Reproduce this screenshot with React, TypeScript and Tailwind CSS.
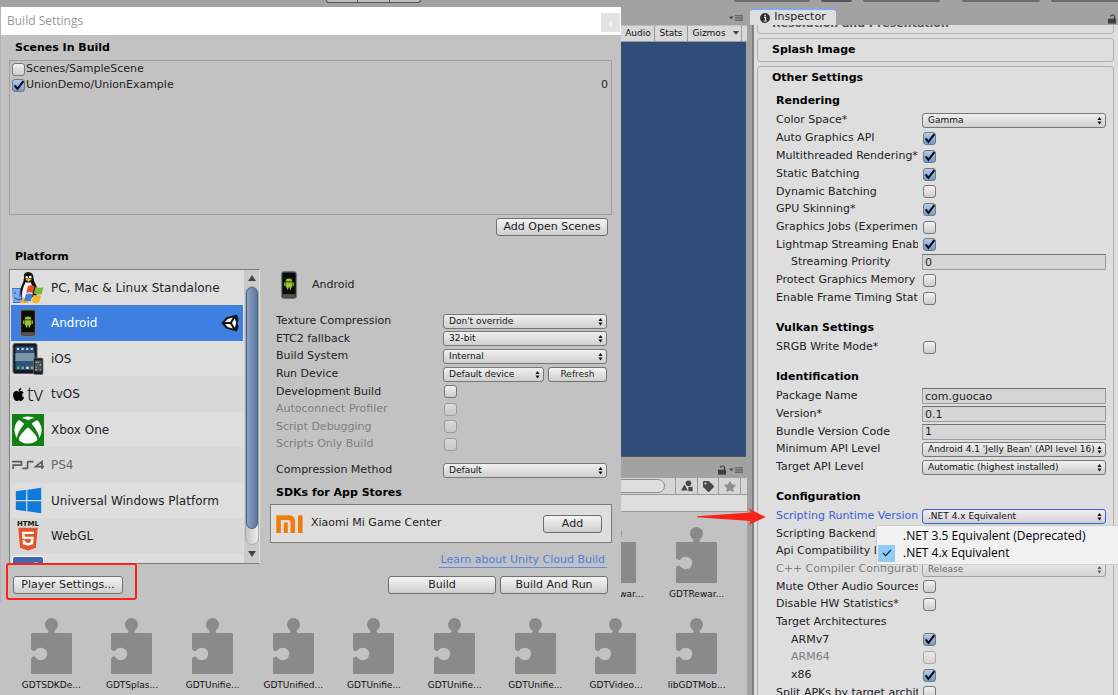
import { useId, useState } from "react";
import type { ReactNode } from "react";
import clsx from "clsx";
import { FaApple, FaHtml5, FaFacebookF, FaStar, FaTag, FaWindows, FaXbox } from "react-icons/fa";

const BUTTON =
  "rounded-[3px] border border-[#6f6f6f] bg-linear-to-b from-[#f4f4f4] to-[#cfcfcf] text-center text-[#222]";

type RowProps = {
  label: string;
  htmlFor?: string;
  tight?: boolean;
  indent?: boolean;
  disabled?: boolean;
  active?: boolean;
  wide?: boolean;
  children?: ReactNode;
};

function Row({ label, htmlFor, tight, indent, disabled, active, wide, children }: RowProps) {
  return (
    <div className={clsx("flex items-center", tight ? "h-[17px]" : "h-[18px]")}>
      <label
        htmlFor={htmlFor}
        className={clsx(
          "mr-1 shrink-0 overflow-hidden whitespace-nowrap leading-4",
          wide ? "w-[163px]" : "w-[142px]",
          indent && "pl-[15px]",
          disabled && "text-[#7f7f7f]",
          active && "text-[#3a5fd9]",
        )}
      >
        {label}
      </label>
      {children}
    </div>
  );
}

type CheckProps = { id?: string; checked?: boolean; disabled?: boolean; label?: string };

function Check({ id, checked = false, disabled, label }: CheckProps) {
  const [on, setOn] = useState(checked);

  return (
    <span className={clsx("relative inline-flex h-[13px] w-[13px] shrink-0", disabled && "opacity-50")}>
      <input
        id={id}
        type="checkbox"
        aria-label={label}
        checked={on}
        disabled={disabled}
        onChange={() => setOn(!on)}
        className={clsx(
          "h-[13px] w-[13px] appearance-none rounded-[3px] border border-[#777] bg-linear-to-b",
          on ? "from-[#b4cdec] to-[#6f9bd6]" : "from-[#f2f2f2] to-[#cccccc]",
        )}
      />
      {on && (
        <svg viewBox="0 0 13 13" className="pointer-events-none absolute inset-0 h-[13px] w-[13px]">
          <path d="M2.6 6.4 L5.4 9.8 L11.4 2.2" fill="none" stroke="#0a0a0a" strokeWidth="2.1" />
        </svg>
      )}
    </span>
  );
}

type PopupProps = { id?: string; value: string; disabled?: boolean; active?: boolean };

function Popup({ id, value, disabled, active }: PopupProps) {
  return (
    <span className={clsx("relative flex min-w-0 flex-1", disabled && "opacity-60")}>
      <select
        id={id}
        disabled={disabled}
        className={clsx(
          "h-[15px] w-full appearance-none overflow-hidden rounded-[3px] border bg-linear-to-b from-[#f0f0f0] to-[#cfcfcf] pr-[9px] pl-[5px] text-[9px] leading-[13px] text-[#111]",
          active ? "border-[#3a5fd9]" : "border-[#777]",
        )}
      >
        <option>{value}</option>
      </select>
      <svg viewBox="0 0 5 8" className="pointer-events-none absolute top-[4px] right-[4px] h-2 w-[5px]">
        <path d="M2.5 0 L4.6 3 H0.4 Z M2.5 7.4 L4.6 4.4 H0.4 Z" fill="#111" />
      </svg>
    </span>
  );
}

type SettingT = {
  label: string;
  kind: "popup" | "toggle" | "text" | "none";
  value?: string;
  on?: boolean;
  tight?: boolean;
  indent?: boolean;
  disabled?: boolean;
  active?: boolean;
};

function Setting({ item, wide }: { item: SettingT; wide?: boolean }) {
  const id = useId();

  return (
    <Row
      label={item.label}
      htmlFor={item.kind === "none" ? undefined : id}
      tight={item.tight}
      indent={item.indent}
      disabled={item.disabled}
      active={item.active}
      wide={wide}
    >
      {item.kind === "popup" && (
        <span className="relative flex min-w-0 flex-1">
          <Popup id={id} value={item.value ?? ""} disabled={item.disabled} active={item.active} />
          {item.active && <RuntimeMenu />}
        </span>
      )}
      {item.kind === "toggle" && (
        <span className="ml-px flex">
          <Check id={id} checked={item.on} disabled={item.disabled} />
        </span>
      )}
      {item.kind === "text" && (
        <input
          id={id}
          type="text"
          defaultValue={item.value}
          className="h-4 min-w-0 flex-1 border border-[#9c9c9c] border-t-[#707070] bg-[#d5d5d5] px-[2px] leading-[14px] text-[#222]"
        />
      )}
    </Row>
  );
}

function RuntimeMenu() {
  return (
    <div
      role="menu"
      className="absolute top-[16px] left-[-46px] z-20 w-[244px] border border-[#cfcfcf] bg-[#f1f1f1] px-px py-[2px] font-['Open_Sans',sans-serif] text-[12px] text-black"
    >
      <button role="menuitemradio" aria-checked="false" className="flex h-[17px] w-full items-center pl-[25px] whitespace-nowrap">
        .NET 3.5 Equivalent (Deprecated)
      </button>
      <button role="menuitemradio" aria-checked="true" className="flex h-[17px] w-full items-center whitespace-nowrap">
        <span className="mr-2 flex h-[17px] w-[17px] items-center justify-center bg-[#91c9f7]">
          <svg viewBox="0 0 10 8" className="h-2 w-[10px]">
            <path d="M1 4 L3.6 6.6 L9 1" fill="none" stroke="#1b2c3b" strokeWidth="1.2" />
          </svg>
        </span>
        .NET 4.x Equivalent
      </button>
    </div>
  );
}

const rendering: SettingT[] = [
  { label: "Color Space*", kind: "popup", value: "Gamma" },
  { label: "Auto Graphics API", kind: "toggle", on: true },
  { label: "Multithreaded Rendering*", kind: "toggle", on: true },
  { label: "Static Batching", kind: "toggle", on: true },
  { label: "Dynamic Batching", kind: "toggle", tight: true },
  { label: "GPU Skinning*", kind: "toggle", on: true },
  { label: "Graphics Jobs (Experimental)*", kind: "toggle" },
  { label: "Lightmap Streaming Enabled", kind: "toggle", on: true, tight: true },
  { label: "Streaming Priority", kind: "text", value: "0", indent: true },
  { label: "Protect Graphics Memory", kind: "toggle" },
  { label: "Enable Frame Timing Stats", kind: "toggle" },
];

const vulkan: SettingT[] = [{ label: "SRGB Write Mode*", kind: "toggle" }];

const identification: SettingT[] = [
  { label: "Package Name", kind: "text", value: "com.guocao" },
  { label: "Version*", kind: "text", value: "0.1" },
  { label: "Bundle Version Code", kind: "text", value: "1", tight: true },
  { label: "Minimum API Level", kind: "popup", value: "Android 4.1 'Jelly Bean' (API level 16)" },
  { label: "Target API Level", kind: "popup", value: "Automatic (highest installed)" },
];

const configuration: SettingT[] = [
  { label: "Scripting Runtime Version", kind: "popup", value: ".NET 4.x Equivalent", active: true },
  { label: "Scripting Backend", kind: "none", tight: true },
  { label: "Api Compatibility Level*", kind: "none" },
  { label: "C++ Compiler Configuration", kind: "popup", value: "Release", disabled: true },
  { label: "Mute Other Audio Sources*", kind: "toggle", tight: true },
  { label: "Disable HW Statistics*", kind: "toggle" },
  { label: "Target Architectures", kind: "none" },
  { label: "ARMv7", kind: "toggle", on: true, indent: true, tight: true },
  { label: "ARM64", kind: "toggle", indent: true, disabled: true },
  { label: "x86", kind: "toggle", on: true, indent: true },
  { label: "Split APKs by target architecture", kind: "toggle", tight: true },
];

const groups = [
  { title: "Rendering", items: rendering },
  { title: "Vulkan Settings", items: vulkan },
  { title: "Identification", items: identification },
  { title: "Configuration", items: configuration },
];

const androidTop: SettingT[] = [
  { label: "Texture Compression", kind: "popup", value: "Don't override" },
  { label: "ETC2 fallback", kind: "popup", value: "32-bit", tight: true },
  { label: "Build System", kind: "popup", value: "Internal" },
];

const androidToggles: SettingT[] = [
  { label: "Development Build", kind: "toggle", tight: true },
  { label: "Autoconnect Profiler", kind: "toggle", disabled: true },
  { label: "Script Debugging", kind: "toggle", disabled: true, tight: true },
  { label: "Scripts Only Build", kind: "toggle", disabled: true },
];

function AndroidPhone() {
  return (
    <svg viewBox="0 0 16 28" className="h-7 w-4">
      <rect x="0.5" y="0.5" width="15" height="27" rx="2.5" fill="#3b3b3b" stroke="#777" />
      <rect x="1.6" y="2" width="12.8" height="21" rx="0.8" fill="#0b0b0b" />
      <rect x="2" y="23.6" width="12" height="3" rx="1" fill="#5b5552" />
      <g fill="#9bc531">
        <path d="M4.7 10.6 A3.3 3.1 0 0 1 11.3 10.6 Z" />
        <path d="M4.7 11.2 H11.3 V15.6 Q11.3 16.4 10.5 16.4 H5.5 Q4.7 16.4 4.7 15.6 Z" />
        <rect x="3.1" y="11.2" width="1.2" height="3.8" rx="0.6" />
        <rect x="11.7" y="11.2" width="1.2" height="3.8" rx="0.6" />
        <rect x="6" y="15" width="1.3" height="3.6" rx="0.6" />
        <rect x="8.7" y="15" width="1.3" height="3.6" rx="0.6" />
      </g>
      <path d="M5.6 8.2 L5 7.2 M10.4 8.2 L11 7.2" stroke="#9bc531" strokeWidth="0.5" />
    </svg>
  );
}

function DesktopIcon() {
  return (
    <svg viewBox="0 0 32 32" className="h-8 w-8">
      <path d="M0 16 H14 V31 H1 Z" fill="#3f74c8" />
      <path d="M1 17 H8 L7 25 H9 V30 H1 Z" fill="#7fa9e6" />
      <path d="M3 20 V22 M2.6 26 Q6 28.6 10 27" fill="none" stroke="#173a77" strokeWidth="0.9" />
      <path d="M12 6 Q11 0 16 0 Q21.5 0 21.5 6 Q21.5 9 24 13 Q27 19 24 24 L12 27 Q7 22 9 15 Q12 10 12 6 Z" fill="#111" />
      <path d="M13.6 10 Q16.5 11 18.5 10 Q22 16 20 25 L11 28 Q8 21 13.6 10 Z" fill="#f3f3f3" />
      <circle cx="14.7" cy="5.2" r="1.2" fill="#fff" />
      <circle cx="18.2" cy="5.2" r="1.4" fill="#fff" />
      <path d="M13.4 7.6 L16.4 6.2 L19.8 7.4 L16.4 9.8 Z" fill="#f4b81e" />
      <path d="M10 27 Q15 24 18 28 L16 31 H8 Z" fill="#f0b022" />
      <path d="M16 14 Q19 12.4 22.6 14.2 L21 21 Q17.6 19.4 14.2 21.2 Z" fill="#e2502b" />
      <path d="M23.6 14.8 Q27 16.8 31.4 15 L29.6 22 Q25.6 23.6 21.8 21.6 Z" fill="#7cb82f" />
      <path d="M13.8 22.4 Q17.4 20.6 20.6 22.4 L18.8 29.4 Q15.4 27.8 12 29.6 Z" fill="#3b80d6" />
      <path d="M21.6 22.8 Q25.2 24.8 29.2 23 L27.4 30.2 Q23.6 32.4 19.8 30 Z" fill="#f6b62c" />
    </svg>
  );
}

function IosIcon() {
  return (
    <svg viewBox="0 0 32 32" className="h-8 w-8">
      <rect x="1" y="0.5" width="24" height="30" rx="2" fill="#17191c" stroke="#55595e" />
      <rect x="3.4" y="3.6" width="19" height="23.4" fill="#2f5377" />
      <rect x="3.4" y="10" width="19" height="8" fill="#7c97ad" />
      <g fill="#c9dbe9">
        <rect x="5" y="5" width="2" height="2" />
        <rect x="9.6" y="5" width="2" height="2" />
        <rect x="14.2" y="5" width="2" height="2" />
        <rect x="18.8" y="5" width="2" height="2" />
      </g>
      <g>
        <rect x="5" y="23.6" width="2.4" height="2.4" fill="#64c04b" />
        <rect x="9.6" y="23.6" width="2.4" height="2.4" fill="#5aa5e8" />
        <rect x="14.2" y="23.6" width="2.4" height="2.4" fill="#d8e6ef" />
        <rect x="18.8" y="23.6" width="2.4" height="2.4" fill="#e78f3a" />
      </g>
      <rect x="21.5" y="15" width="9.5" height="16.5" rx="1.5" fill="#1d1d1d" stroke="#777" strokeWidth="0.7" />
      <rect x="22.8" y="17.4" width="7" height="11" fill="#38566e" />
      <g fill="#9bd06b">
        <rect x="23.6" y="18.6" width="1.4" height="1.4" />
        <rect x="27.6" y="21" width="1.4" height="1.4" />
        <rect x="23.6" y="26" width="1.4" height="1.4" />
      </g>
      <g fill="#e07b58">
        <rect x="25.6" y="18.6" width="1.4" height="1.4" />
        <rect x="23.6" y="23.4" width="1.4" height="1.4" />
        <rect x="27.6" y="26" width="1.4" height="1.4" />
      </g>
    </svg>
  );
}

function TvIcon() {
  return (
    <span className="flex w-8 items-center text-black">
      <FaApple className="h-[15px] w-[13px] shrink-0" />
      <span className="ml-[2px] font-['Open_Sans',sans-serif] text-[20px] leading-6 font-light">tv</span>
    </span>
  );
}

function XboxIcon() {
  return (
    <span className="flex h-8 w-8 items-center justify-center bg-[#128012]">
      <FaXbox className="h-7 w-7 text-white" />
    </span>
  );
}

function PlayStationIcon() {
  return (
    <svg viewBox="0 0 32 10" className="h-[10px] w-8" fill="none" stroke="#5c5c5c" strokeWidth="1.7">
      <polyline points="0,1.6 9.4,1.6 9.4,5.2 1.2,5.2 1.2,9" />
      <polyline points="21.4,1.6 16.2,1.6 15.6,2.4 15.6,7.6 15,8.4 10.4,8.4" />
      <polyline points="32,6.6 23.6,6.6 30,1.6 30,9" />
    </svg>
  );
}

function WebGLIcon() {
  return (
    <span className="flex w-8 flex-col items-center">
      <svg viewBox="0 0 22 6" className="h-[6px] w-[22px]">
        <text x="11" y="5.8" textAnchor="middle" fontSize="7" fontWeight="bold" fontFamily="DejaVu Sans" fill="#111">
          HTML
        </text>
      </svg>
      <FaHtml5 className="h-[26px] w-6 bg-[linear-gradient(#fff,#fff)] bg-[length:14px_16px] bg-center bg-no-repeat text-[#e2562c]" />
    </span>
  );
}

function FacebookIcon() {
  return (
    <span className="flex h-8 w-8 items-center justify-end rounded-[3px] border border-white bg-[#4267b2] pr-1">
      <FaFacebookF className="h-6 w-3 text-white" />
    </span>
  );
}

function UnityMark() {
  return (
    <svg viewBox="0 0 18 18" className="h-[18px] w-[18px]">
      <path d="M0.4 9 L5 3.4 L16 0.6 L17.6 5.4 L16.4 9 L17.6 12.6 L16 17.4 L5 14.6 Z" fill="#161616" />
      <path d="M4 7.9 L6.6 5 L11.8 3.6 L9.2 7.9 Z" fill="#fff" />
      <path d="M4 10.1 L6.6 13 L11.8 14.4 L9.2 10.1 Z" fill="#fff" />
      <path d="M11 9 L13.8 4.2 L15.2 9 L13.8 13.8 Z" fill="#fff" />
    </svg>
  );
}

const platforms: { name: string; icon: ReactNode; dim?: boolean }[] = [
  { name: "PC, Mac & Linux Standalone", icon: <DesktopIcon /> },
  { name: "Android", icon: <AndroidPhone /> },
  { name: "iOS", icon: <IosIcon /> },
  { name: "tvOS", icon: <TvIcon /> },
  { name: "Xbox One", icon: <XboxIcon /> },
  { name: "PS4", icon: <PlayStationIcon />, dim: true },
  { name: "Universal Windows Platform", icon: <FaWindows className="h-[29px] w-[29px] text-[#0f7ad8]" /> },
  { name: "WebGL", icon: <WebGLIcon /> },
  { name: "", icon: <FacebookIcon /> },
];

function PlatformList() {
  const [selected, setSelected] = useState("Android");

  return (
    <div className="flex h-[295px] w-[251px] shrink-0 border border-[#7c7c7c] border-r-transparent bg-[#dedede] text-[12px]">
      <ul className="min-w-0 flex-1 overflow-hidden px-px">
        {platforms.map((p) => (
          <li key={p.name || "facebook"} className="odd:h-[35px] even:h-9 even:bg-[#d8d8d8]">
            <button
              type="button"
              aria-label={p.name || "Facebook"}
              onClick={() => setSelected(p.name)}
              className={clsx(
                "flex w-full items-center pr-1 text-left",
                p.name ? "h-full" : "h-8 pt-1",
                selected === p.name && "bg-[#3e7fe1] text-white",
                p.dim && "text-[#666]",
              )}
            >
              <span className="ml-px flex w-8 justify-center">{p.icon}</span>
              <span className="ml-[7px] flex-1 whitespace-nowrap">{p.name}</span>
              {p.name === "Android" && <UnityMark />}
            </button>
          </li>
        ))}
      </ul>
      <div className="flex w-[15px] flex-col items-center bg-[#cbcbcb]">
        <svg viewBox="0 0 8 6" className="my-[5px] h-[6px] w-2">
          <path d="M4 0 L8 6 H0 Z" fill="#444" />
        </svg>
        <div className="w-[14px] flex-1 rounded-full border border-[#aaa] bg-linear-to-r from-[#c4c4c4] to-[#eeeeee]">
          <div className="h-[242px] w-full rounded-full border border-[#4b5f80] bg-linear-to-r from-[#8ba1c1] to-[#5e79a3]" />
        </div>
        <svg viewBox="0 0 8 6" className="my-[6px] h-[6px] w-2">
          <path d="M4 6 L8 0 H0 Z" fill="#444" />
        </svg>
      </div>
    </div>
  );
}

function AndroidPanel() {
  const deviceId = useId();
  const compressionId = useId();

  return (
    <div className="min-w-0 flex-1">
      <div className="flex h-8 items-center pl-[11px]">
        <AndroidPhone />
        <span className="ml-[15px]">Android</span>
      </div>

      <div className="mt-[11px] pr-[5px] pl-[6px]">
        {androidTop.map((item) => (
          <Setting key={item.label} item={item} wide />
        ))}
        <Row label="Run Device" htmlFor={deviceId} wide>
          <Popup id={deviceId} value="Default device" />
          <button type="button" className={clsx(BUTTON, "ml-1 h-[15px] w-[59px] text-[9px] leading-[13px]")}>
            Refresh
          </button>
        </Row>
        {androidToggles.map((item) => (
          <Setting key={item.label} item={item} wide />
        ))}
        <div className="mt-2">
          <Row label="Compression Method" htmlFor={compressionId} wide>
            <Popup id={compressionId} value="Default" />
          </Row>
        </div>
        <h2 className="mt-1 leading-5 font-bold text-black">SDKs for App Stores</h2>
      </div>

      <div className="mt-px flex h-[39px] items-center border border-[#7c7c7c] bg-[#dedede] pr-[9px] pl-[5px]">
        <svg viewBox="0 0 27 18" className="h-[18px] w-[27px]" fill="none" stroke="#f07d0a" strokeWidth="4.6">
          <path d="M2.6 18 V2.6 H13 Q16.8 2.6 16.8 6.4 V18" />
          <path d="M9.8 18 V7.4" strokeWidth="4" />
          <path d="M24.3 18 V0.3" />
        </svg>
        <span className="ml-2 flex-1">Xiaomi Mi Game Center</span>
        <button type="button" className={clsx(BUTTON, "h-[18px] w-[59px] leading-4")}>
          Add
        </button>
      </div>

      <div className="mt-[9px] flex justify-end pr-[5px]">
        <a href="#cloud-build" className="h-4 border-b border-[#5b8ee0] px-[2px] leading-[15px] text-[#4a80df]">
          Learn about Unity Cloud Build
        </a>
      </div>
    </div>
  );
}

function BuildSettings() {
  return (
    <section className="absolute top-[7px] left-0 z-10 w-[621px] border-l border-[#b3b3bd] bg-[#c2c2c2]">
      <header className="flex h-7 justify-between bg-white pl-[6px] font-['Open_Sans',sans-serif] text-[12px] leading-[27px] text-[#999]">
        <h1>Build Settings</h1>
        <button type="button" aria-label="Close" className="mt-[6px] mr-px h-[19px] w-[19px] bg-[#e3e3e3] text-[8px] leading-[19px] text-white">
          x
        </button>
      </header>

      <div className="pt-[3px] pr-[9px] pb-2 pl-2">
        <h2 className="pl-[6px] leading-5 font-bold text-black">Scenes In Build</h2>
        <ul className="mt-[2px] h-[155px] border border-[#9f9f9f] pr-[3px] pl-[2px]">
          <li className="flex h-4 items-center">
            <label className="flex items-center gap-px">
              <Check />
              Scenes/SampleScene
            </label>
          </li>
          <li className="flex h-4 items-center justify-between">
            <label className="flex items-center gap-px">
              <Check checked />
              UnionDemo/UnionExample
            </label>
            <span>0</span>
          </li>
        </ul>
        <div className="mt-[3px] flex justify-end pr-1">
          <button type="button" className={clsx(BUTTON, "h-[18px] w-[112px] leading-4 whitespace-nowrap")}>
            Add Open Scenes
          </button>
        </div>

        <h2 className="mt-[11px] pl-[6px] leading-5 font-bold text-black">Platform</h2>
        <div className="mt-[2px] flex gap-[10px]">
          <PlatformList />
          <AndroidPanel />
        </div>

        <footer className="mt-[8px] flex gap-1 pr-1 pl-1">
          <div className="relative mr-auto">
            <button type="button" className={clsx(BUTTON, "h-[18px] w-[110px] leading-4 whitespace-nowrap")}>
              Player Settings...
            </button>
            <span className="pointer-events-none absolute -top-[13px] -right-[14px] -bottom-[6px] -left-[7px] rounded-[3px] border-2 border-[#fb2318]" />
          </div>
          <button type="button" className={clsx(BUTTON, "h-[18px] w-[108px] leading-4")}>
            Build
          </button>
          <button type="button" className={clsx(BUTTON, "h-[18px] w-[108px] leading-4 whitespace-nowrap")}>
            Build And Run
          </button>
        </footer>
      </div>
    </section>
  );
}

function PaneMenuIcon() {
  return (
    <svg viewBox="0 0 14 6" className="h-[6px] w-[14px]">
      <path d="M0 1.4 H4.6 L2.3 4.2 Z" fill="#444" />
      <path d="M6 0.7 H14 M6 2.9 H14 M6 5.1 H14" stroke="#5a5a5a" strokeWidth="1.1" />
    </svg>
  );
}

function LockIcon() {
  return (
    <svg viewBox="0 0 8 10" className="h-[10px] w-2">
      <rect x="0" y="4.6" width="8" height="5" fill="#3e3e3e" />
      <path d="M6.6 5 V3 Q6.6 1 4.4 1 Q2.6 1 2.4 2.6" fill="none" stroke="#3e3e3e" strokeWidth="1.2" />
    </svg>
  );
}

function PuzzleIcon() {
  return (
    <svg viewBox="0 0 41 56" className="h-14 w-[41px]">
      <path
        d="M1 15 H16 Q18 15 17.4 12.6 Q14 10 14 6.6 A6.5 6.5 0 0 1 27 6.6 Q27 10 23.8 12.6 Q23 15 25 15 H40 Q41 15 41 16 V55 Q41 56 40 56 H1 Q0 56 0 55 V41 Q0.6 38 3.6 38.6 Q6 42.2 10 42.2 A6.2 6.2 0 0 0 10 29.8 Q6.2 29.8 4 33 Q0.6 33.4 0 31 V16 Q0 15 1 15 Z"
        fill="#8a8a8a"
      />
    </svg>
  );
}

const assets = [
  "GDTSDKDe...",
  "GDTSplas...",
  "GDTUnifie...",
  "GDTUnified...",
  "GDTUnifie...",
  "GDTUnifie...",
  "GDTUnifie...",
  "GDTVideo...",
  "libGDTMob...",
];

function Asset({ name, className }: { name: string; className?: string }) {
  return (
    <li className={clsx("flex h-[91px] flex-col items-center", className)}>
      <PuzzleIcon />
      <span className="mt-[5px] text-[9px] leading-3 text-[#111]">{name}</span>
    </li>
  );
}

function ProjectPane() {
  return (
    <section className="flex min-h-0 flex-1 flex-col">
      <div className="flex h-[21px] shrink-0 items-center justify-end gap-[3px] pt-[5px] pr-1">
        <LockIcon />
        <PaneMenuIcon />
      </div>
      <div className="flex h-[17px] shrink-0 items-center justify-end border-b border-[#999] bg-[#d5d5d5] pr-[6px] text-[#4a4a4a]">
        <input
          type="search"
          aria-label="Search assets"
          className="mr-[10px] h-[14px] w-60 rounded-full border border-[#8c8c8c] bg-[#dedede] px-2"
        />
        <button type="button" aria-label="Search by type" className="flex h-full w-[22px] items-center justify-center border-l border-[#999]">
          <svg viewBox="0 0 12 12" className="h-3 w-3" fill="#4a4a4a">
            <circle cx="7.5" cy="3.2" r="2.8" />
            <path d="M3.4 4.6 L6.8 10.6 H0 Z" />
            <rect x="7.4" y="6.8" width="4.2" height="4.4" />
          </svg>
        </button>
        <button type="button" aria-label="Search by label" className="flex h-full w-[21px] items-center justify-center border-l border-[#999]">
          <FaTag className="h-[11px] w-[11px]" />
        </button>
        <button type="button" aria-label="Save search" className="flex h-full w-[23px] items-center justify-center border-x border-[#999]">
          <FaStar className="h-[11px] w-3 text-[#8e8e8e]" />
        </button>
      </div>
      <div className="h-[17px] shrink-0 border-b border-[#999] bg-[#dedede]" />
      <ul className="grid min-h-0 flex-1 grid-cols-9 content-start overflow-hidden bg-[#c2c2c2] pt-[15px] pr-[10px] pl-[11px]">
        <Asset name="GDTRewar..." className="col-start-8" />
        <Asset name="GDTRewar..." />
        {assets.map((name, i) => (
          <Asset key={i} name={name} />
        ))}
      </ul>
    </section>
  );
}

function GamePane() {
  return (
    <section className="flex h-[449px] shrink-0 flex-col">
      <div className="flex h-[17px] items-end justify-end pr-1 pb-[4px]">
        <PaneMenuIcon />
      </div>
      <div className="flex h-[17px] justify-end border-y border-t-[#bbb] border-b-[#999] bg-[#d8d8d8] pr-[5px] text-[9px] leading-[15px] text-[#111]">
        <button type="button" className="w-8">Audio</button>
        <button type="button" className="w-[33px] border-l border-[#999]">Stats</button>
        <button type="button" className="w-[43px] border-l border-[#999]">Gizmos</button>
        <button type="button" aria-label="Gizmos menu" className="flex w-3 justify-center border-r border-[#999] pt-[5px]">
          <svg viewBox="0 0 6 4" className="h-1 w-[6px]">
            <path d="M0 0 H6 L3 4 Z" fill="#444" />
          </svg>
        </button>
      </div>
      <div className="mr-px flex-1 border-b border-[#555] bg-[#314d79]" />
    </section>
  );
}

function Inspector() {
  return (
    <aside className="flex w-[371px] shrink-0 flex-col">
      <div className="flex h-[17px] shrink-0 items-end justify-between pr-[2px] pl-[3px]">
        <div className="flex h-[17px] w-[86px] items-center justify-center gap-1 rounded-t-[4px] border-t-2 border-[#83a7e0] bg-[#dedede]">
          <svg viewBox="0 0 10 10" className="h-[10px] w-[10px]">
            <circle cx="5" cy="5" r="5" fill="#333" />
            <path d="M4 4.4 H5.6 V8 M3.8 8 H6.6 M4.4 2.4 H5.8" stroke="#eee" strokeWidth="1.2" fill="none" />
          </svg>
          <span>Inspector</span>
        </div>
        <span className="mb-px">
          <LockIcon />
        </span>
      </div>

      <div className="ml-[5px] min-h-0 flex-1 overflow-hidden border-l-2 border-[#808080] bg-[#dedede] pr-1 pl-[3px]">
        <h2 className="-mt-[15px] mb-1 h-6 rounded-[3px] border border-[#b0b0b0] pl-[14px] leading-[26px] font-bold text-[#555]">
          Resolution and Presentation
        </h2>
        <h2 className="mb-1 h-6 rounded-[3px] border border-[#b0b0b0] pl-[14px] leading-[22px] font-bold text-black">
          Splash Image
        </h2>
        <div className="rounded-[3px] border border-[#b0b0b0] pr-[7px] pl-[18px]">
          <h2 className="mb-[2px] -ml-1 leading-[21px] font-bold text-black">Other Settings</h2>
          <div className="flex flex-col gap-[10px]">
            {groups.map((group) => (
              <section key={group.title}>
                <h3 className="leading-[21px] font-bold text-black">{group.title}</h3>
                {group.items.map((item) => (
                  <Setting key={item.label} item={item} />
                ))}
              </section>
            ))}
          </div>
        </div>
      </div>
    </aside>
  );
}

export default function App() {
  return (
    <main className="relative flex h-screen flex-col overflow-hidden bg-[#a2a2a2] font-['DejaVu_Sans',sans-serif] text-[11px] text-[#222]">
      <div className="flex h-2 shrink-0 items-start justify-end">
        <div className="mr-auto ml-[326px] flex h-[3px] w-[95px] divide-x divide-[#666] rounded-b-[3px] border border-t-0 border-[#555] bg-[#bdbdbd]">
          <span className="flex-1" />
          <span className="flex-1" />
          <span className="flex-1" />
        </div>
        <div className="flex gap-[11px]">
          <span className="h-[2px] w-[76px] rounded-b-[3px] bg-[#6c6c6c]" />
          <span className="h-[2px] w-[31px] rounded-b-[3px] bg-[#555]" />
          <span className="mr-[11px] h-[2px] w-[77px] rounded-b-[3px] bg-[#6c6c6c]" />
          <span className="h-[2px] w-[78px] rounded-b-[3px] bg-[#6c6c6c]" />
          <span className="h-[2px] w-[67px] rounded-bl-[3px] bg-[#6c6c6c]" />
        </div>
      </div>

      <div className="flex min-h-0 flex-1">
        <div className="flex min-w-0 flex-1 flex-col">
          <GamePane />
          <ProjectPane />
        </div>
        <Inspector />
      </div>

      <BuildSettings />

      <svg viewBox="0 0 69 18" className="pointer-events-none absolute top-[508px] right-[352px] z-30 h-[18px] w-[69px]">
        <path d="M0 8.2 L54 4.6 L51.6 0.6 L68.6 9 L51.6 17 L54 13 L0 9.2 Z" fill="#fb2318" />
      </svg>
    </main>
  );
}
